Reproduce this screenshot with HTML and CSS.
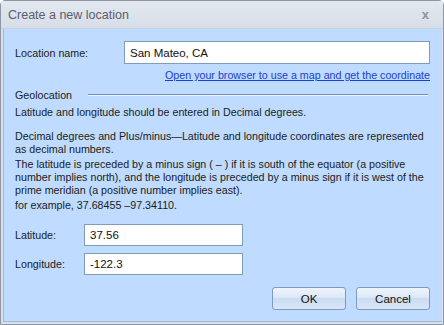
FILE: index.html
```html
<!doctype html>
<html lang="en">
 <head>
  <meta charset="UTF-8">
  <title>Create a new location</title>
  <link rel="stylesheet" href="styles.css">
 </head>
 <body>
  <div class="dialog">
   <div class="title-bar">
    <span class="title">Create a new location</span>
    <span class="close">x</span>
   </div>
   <div class="content">
    <div class="row name-row">
     <label for="locName">Location name:</label>
     <input type="text" id="locName" value="San Mateo, CA">
    </div>
    <div class="map-link"><a href="#">Open your browser to use a map and get the coordinate</a></div>
    <div class="group-head">
     <span>Geolocation</span>
     <span class="rule"></span>
    </div>
    <p class="note">Latitude and longitude should be entered in Decimal degrees.</p>
    <p class="help">Decimal degrees and Plus/minus—Latitude and longitude coordinates are represented as decimal numbers.</p>
    <p class="help">The latitude is preceded by a minus sign ( – ) if it is south of the equator (a positive number implies north), and the longitude is preceded by a minus sign if it is west of the prime meridian (a positive number implies east).</p>
    <p class="help example">for example, 37.68455 –97.34110.</p>
    <div class="row coord-row">
     <label for="lat">Latitude:</label>
     <input type="text" id="lat" value="37.56">
    </div>
    <div class="row coord-row">
     <label for="lng">Longitude:</label>
     <input type="text" id="lng" value="-122.3">
    </div>
    <div class="buttons">
     <button type="button">OK</button>
     <button type="button">Cancel</button>
    </div>
   </div>
  </div>
 </body>
</html>
```

FILE: styles.css
```css
body {
  margin: 0;
  font-family: "Liberation Sans", Arial, sans-serif;
  font-size: 10.7px;
  color: #1b1b1b;
}
.dialog {
  width: 442px;
  height: 323px;
  border: 1px solid #8c97a6;
  border-radius: 5px 5px 0 0;
  background: #d9e0ea;
  display: flex;
  flex-direction: column;
}
.title-bar {
  height: 27px;
  display: flex;
  align-items: center;
  justify-content: space-between;
  padding: 0 14px 0 7px;
  background: linear-gradient(#e3e8ef, #d7dee8);
  border-bottom: 1px solid #c9d3df;
}
.title {
  font-size: 12.5px;
  color: #5c5c70;
}
.close {
  font-size: 13px;
  font-weight: bold;
  color: #8d939b;
}
.content {
  flex: 1;
  margin: 0 1px 2px 2px;
  background: #bfdbff;
  border-left: 1px solid #a7b8cc;
  border-bottom: 1px solid #a7b8cc;
  padding: 12px 12px 0 11px;
}
.row {
  display: flex;
  align-items: center;
}
.row label {
  flex: none;
}
input {
  font: inherit;
  font-size: 11.5px;
  color: #111;
  height: 22px;
  box-sizing: border-box;
  border: 1px solid #7f9db9;
  background: #fff;
  padding: 0 5px;
  outline: none;
}
.name-row label {
  width: 109px;
}
.name-row input {
  flex: 1;
  height: 23px;
}
.map-link {
  text-align: right;
  margin-top: 5px;
}
.map-link a {
  color: #1a3ed6;
}
.group-head {
  display: flex;
  align-items: center;
  gap: 16px;
  margin-top: 8px;
}
.rule {
  flex: 1;
  height: 1px;
  background: #6f90c0;
  border-bottom: 1px solid #eef4fc;
  margin-right: 2px;
}
p {
  margin: 0;
}
.note {
  margin-top: 5px;
}
.help {
  line-height: 13px;
}
.note + .help {
  margin-top: 12px;
}
.help + .help {
  margin-top: 2px;
}
.example {
  margin-top: 4px;
}
.coord-row label {
  width: 69px;
}
.coord-row input {
  width: 159px;
}
.example + .coord-row {
  margin-top: 12px;
}
.coord-row + .coord-row {
  margin-top: 7px;
}
.buttons {
  display: flex;
  justify-content: flex-end;
  gap: 10px;
  margin-top: 12px;
}
button {
  font: inherit;
  font-size: 11.5px;
  color: #111;
  width: 74px;
  height: 23px;
  border: 1px solid #7d9ac0;
  border-radius: 3px;
  background: linear-gradient(#eef4fc 0%, #dde8f6 45%, #cbdcf1 50%, #d9e6f6 100%);
}
```
